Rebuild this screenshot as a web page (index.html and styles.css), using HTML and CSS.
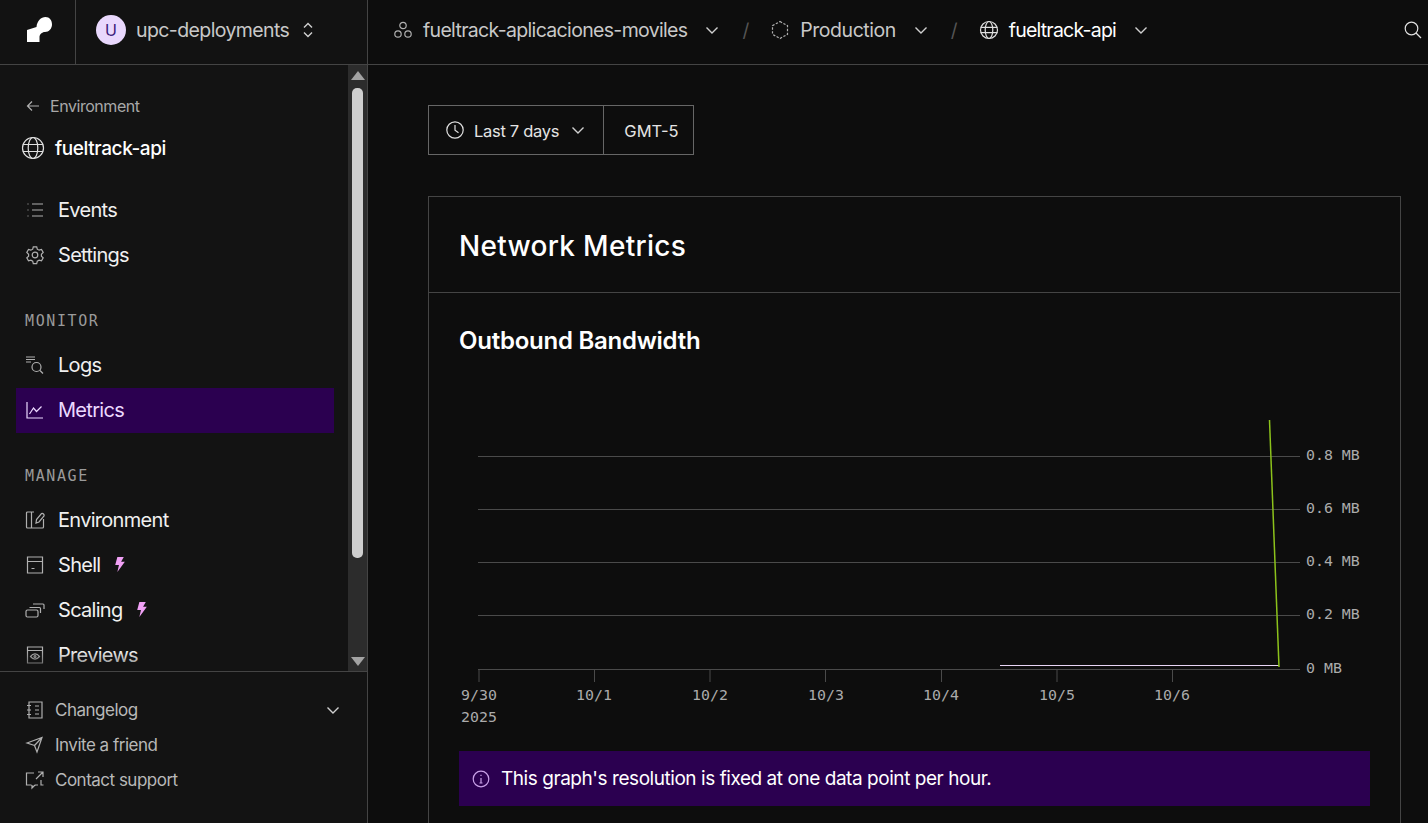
FILE: index.html
```html
<!DOCTYPE html>
<html lang="en">
<head>
  <meta charset="UTF-8">
  <title>fueltrack-api metrics</title>
  <link rel="stylesheet" href="styles.css">
</head>
<body>

  <header class="topbar">
    <div class="topbar-left">
      <div class="logo-cell">
        <svg class="logo" viewBox="0 0 25 25" width="25" height="25"><path fill="#fff" d="M0 13 9.500 10C10 4 14 0 18.500 0 22.600 0 25 3.400 25 7.500 25 11.500 22 15 18 15 15 15 12.500 17.500 12.500 20V25H0Z"/></svg>
      </div>
      <div class="team">
        <span class="avatar">U</span>
        <span class="team-name">upc-deployments</span>
        <svg class="icon-sm" viewBox="0 0 16 20" width="16" height="20"><path d="M4 7.500 8 3.500l4 4M4 12.500l4 4 4-4"/></svg>
      </div>
    </div>
    <nav class="crumbs">
      <svg class="icon" viewBox="0 0 20 20" width="20" height="20"><circle cx="10" cy="5.500" r="3.200"/><circle cx="5" cy="14" r="3.200"/><circle cx="15" cy="14" r="3.200"/></svg>
      <span class="crumb">fueltrack-aplicaciones-moviles</span>
      <svg class="chev" viewBox="0 0 16 16" width="16" height="16"><path d="M2.500 5.500 8 11l5.500-5.500"/></svg>
      <span class="slash">/</span>
      <svg class="icon" viewBox="0 0 20 20" width="20" height="20"><path stroke-dasharray="2.400 1.500" d="M10 1.500 17.500 5.700v8.600L10 18.500l-7.500-4.200V5.700Z"/></svg>
      <span class="crumb crumb-env">Production</span>
      <svg class="chev" viewBox="0 0 16 16" width="16" height="16"><path d="M2.500 5.500 8 11l5.500-5.500"/></svg>
      <span class="slash">/</span>
      <svg class="icon icon-light" viewBox="0 0 20 20" width="20" height="20"><circle cx="10" cy="10" r="8.500"/><ellipse cx="10" cy="10" rx="3.800" ry="8.500"/><path d="M1.500 7.300h17M1.500 12.700h17"/></svg>
      <span class="crumb crumb-current">fueltrack-api</span>
      <svg class="chev" viewBox="0 0 16 16" width="16" height="16"><path d="M2.500 5.500 8 11l5.500-5.500"/></svg>
    </nav>
    <svg class="search icon-light" viewBox="0 0 20 20" width="20" height="20"><circle cx="8.500" cy="8.500" r="6.300"/><path d="m13 13 5 5"/></svg>
  </header>

  <div class="layout">
    <aside class="sidebar">
      <div class="side-scroll">
        <div class="side-nav">
          <a class="back">
            <svg class="icon" viewBox="0 0 16 16" width="16" height="16"><path d="M14 8H2.500M7 3.500 2.500 8 7 12.500"/></svg>
            Environment
          </a>
          <div class="service">
            <svg class="icon icon-light" viewBox="0 0 24 24" width="24" height="24"><circle cx="12" cy="12" r="10.500"/><ellipse cx="12" cy="12" rx="4.800" ry="10.500"/><path d="M1.800 8.500h20.400M1.800 15.500h20.400"/></svg>
            fueltrack-api
          </div>

          <a class="item">
            <svg class="icon" viewBox="0 0 20 20" width="20" height="20"><path d="M7 4h11M7 10h11M7 16h11M2.500 4h1M2.500 10h1M2.500 16h1"/></svg>
            Events
          </a>
          <a class="item">
            <svg class="icon" viewBox="0 0 20 20" width="20" height="20"><circle cx="10" cy="10" r="2.800"/><path d="M8.300 1.800h3.400l.6 2.400 1.800 1 2.400-.7 1.700 3-1.800 1.700v2l1.800 1.700-1.700 3-2.400-.7-1.800 1-.6 2.400H8.300l-.6-2.400-1.800-1-2.400.7-1.700-3 1.800-1.700v-2L1.800 7.500l1.700-3 2.400.7 1.800-1Z"/></svg>
            Settings
          </a>

          <div class="group-label">MONITOR</div>
          <a class="item">
            <svg class="icon" viewBox="0 0 20 20" width="20" height="20"><path d="M1 2h9M1 4.500h9M1 7h5"/><circle cx="11.500" cy="12" r="4.500"/><path d="m15 15.500 3 3"/></svg>
            Logs
          </a>
          <a class="item item-active">
            <svg class="icon" viewBox="0 0 20 20" width="20" height="20"><path d="M2 2v16h16M4.500 14l4-6 3 3.500 5-5"/></svg>
            Metrics
          </a>

          <div class="group-label">MANAGE</div>
          <a class="item">
            <svg class="icon" viewBox="0 0 20 20" width="20" height="20"><path d="M9 2H2.500A1 1 0 0 0 1.500 3v14a1 1 0 0 0 1 1h15a1 1 0 0 0 1-1V9M6.500 2v16M11 13l.5-3.500 5-6a2 2 0 0 1 2.500 2.500l-5 6Z"/></svg>
            Environment
          </a>
          <a class="item">
            <svg class="icon" viewBox="0 0 20 20" width="20" height="20"><path d="M2.500 2h15v16h-15ZM2.500 6.500h15M6.500 13.500h3"/></svg>
            Shell
            <svg class="bolt" viewBox="0 0 10 14" width="11" height="15"><path d="M3 0h6L6.500 4.500H10L3 14l1.500-6.500H1Z"/></svg>
          </a>
          <a class="item">
            <svg class="icon" viewBox="0 0 20 20" width="20" height="20"><rect x="1" y="10" width="12" height="7" rx="1.500"/><path d="M4.500 7.500h10a1 1 0 0 1 1 1V13M8 4h10a1 1 0 0 1 1 1v4"/></svg>
            Scaling
            <svg class="bolt" viewBox="0 0 10 14" width="11" height="15"><path d="M3 0h6L6.500 4.500H10L3 14l1.500-6.500H1Z"/></svg>
          </a>
          <a class="item">
            <svg class="icon" viewBox="0 0 20 20" width="20" height="20"><path d="M2.500 2h15v16h-15ZM2.500 5.500h15"/><path d="M5.500 11.500c2.800-3.400 6.200-3.400 9 0-2.800 3.400-6.200 3.400-9 0Z"/><circle cx="10" cy="11.500" r="1"/></svg>
            Previews
          </a>
        </div>
        <div class="scrollbar">
          <span class="arrow-up"></span>
          <span class="thumb"></span>
          <span class="arrow-down"></span>
        </div>
      </div>

      <div class="side-foot">
        <a class="foot-item">
          <svg class="icon" viewBox="0 0 20 20" width="20" height="20"><path d="M4 2h13v16H4ZM2 5.500h4M2 10h4M2 14.500h4M10 6h4M10 10h4M10 14h4"/></svg>
          Changelog
          <svg class="chev foot-chev" viewBox="0 0 16 16" width="16" height="16"><path d="M2.500 5.500 8 11l5.500-5.500"/></svg>
        </a>
        <a class="foot-item">
          <svg class="icon" viewBox="0 0 20 20" width="20" height="20"><path d="M2 8 17 2.500 12 17l-2.500-6.500ZM9.500 10.500 17 2.500"/></svg>
          Invite a friend
        </a>
        <a class="foot-item">
          <svg class="icon" viewBox="0 0 20 20" width="20" height="20"><path d="M9 3H1.500v12h5M10 15h3M16 10v5h2.500M11 9l7-7M13 2h5v5M7 15v3l3-3"/></svg>
          Contact support
        </a>
      </div>
    </aside>

    <main class="content">
      <div class="filters">
        <div class="filter-range">
          <svg class="icon icon-light" viewBox="0 0 20 20" width="20" height="20"><circle cx="10" cy="10" r="8.200"/><path d="M10 5v5.300l3.500 2.500"/></svg>
          Last 7 days
          <svg class="chev" viewBox="0 0 16 16" width="16" height="16"><path d="M2.500 5.500 8 11l5.500-5.500"/></svg>
        </div>
        <div class="filter-zone">GMT-5</div>
      </div>

      <section class="card">
        <h2 class="card-title">Network Metrics</h2>
        <div class="card-body">
          <h3 class="chart-title">Outbound Bandwidth</h3>
          <svg class="chart" viewBox="0 0 911 351" width="911" height="351">
            <g class="grid">
              <path d="M19 76.500H841M19 129.500H841M19 182.500H841M19 235.500H841M19 289.500H841"/>
              <path d="M20 289v13M135.500 289v13M251 289v13M366.500 289v13M482.500 289v13M598 289v13M713.500 289v13"/>
            </g>
            <g class="labels">
              <text x="847" y="80">0.8 MB</text>
              <text x="847" y="133">0.6 MB</text>
              <text x="847" y="186">0.4 MB</text>
              <text x="847" y="239">0.2 MB</text>
              <text x="847" y="293">0 MB</text>
              <text x="2" y="320">9/30</text>
              <text x="2" y="342">2025</text>
              <text x="117" y="320">10/1</text>
              <text x="233" y="320">10/2</text>
              <text x="349" y="320">10/3</text>
              <text x="464" y="320">10/4</text>
              <text x="580" y="320">10/5</text>
              <text x="695" y="320">10/6</text>
            </g>
            <path class="line-base" d="M541 285.500H820"/>
            <path class="line-spike" d="M810.500 40 820 287"/>
          </svg>
          <div class="notice">
            <svg class="notice-icon" viewBox="0 0 18 18" width="18" height="18"><circle cx="9" cy="9" r="7.800"/><path d="M9 8v5M7.500 13h3M9 4.800v1.200"/></svg>
            This graph's resolution is fixed at one data point per hour.
          </div>
        </div>
      </section>
    </main>
  </div>

</body>
</html>
```

FILE: styles.css
```css
* {
  box-sizing: border-box;
}

html, body {
  height: 100%;
}

body {
  margin: 0;
  display: flex;
  flex-direction: column;
  overflow: hidden;
  background: #0d0d0d;
  color: #fff;
  font-family: Inter, 'Liberation Sans', sans-serif;
}

svg {
  flex: none;
  fill: none;
  stroke-width: 1.2;
}

/* icon colours */
.icon {
  stroke: #b0b0b0;
}

.icon-light {
  stroke: #e0e0e0;
}

.icon-sm, .chev {
  stroke: #d0d0d0;
  stroke-width: 1.4;
}

/* top bar */
.topbar {
  flex: none;
  height: 65px;
  display: flex;
  align-items: center;
  border-bottom: 1px solid #444;
}

.topbar-left {
  flex: none;
  width: 368px;
  height: 100%;
  display: flex;
  background: #121212;
  border-right: 1px solid #444;
}

.logo-cell {
  width: 76px;
  padding: 0 0 6px 4px;
  display: flex;
  align-items: center;
  justify-content: center;
  border-right: 1px solid #444;
}

.logo {
  stroke: none;
}

.team {
  display: flex;
  align-items: center;
  padding: 0 0 4px 20px;
}

.avatar {
  width: 30px;
  height: 30px;
  margin-right: 10px;
  display: flex;
  align-items: center;
  justify-content: center;
  border-radius: 50%;
  background: #e9d8fd;
  color: #3b1a7a;
  font-size: 16px;
}

.team-name {
  margin-right: 11px;
  color: #c8c8c8;
  font-size: 19.500px;
  letter-spacing: -0.600px;
}

.crumbs {
  display: flex;
  align-items: center;
  padding: 0 0 4px 25px;
}

.crumb {
  margin-left: 10px;
  color: #c8c8c8;
  font-size: 19.500px;
  letter-spacing: -0.670px;
}

.crumb-env {
  letter-spacing: -0.450px;
}

.crumb-current {
  color: #fff;
  letter-spacing: -0.770px;
}

.crumbs .chev {
  margin-left: 17px;
}

.slash {
  margin: 0 21px 0 22px;
  color: #555;
  font-size: 19px;
}

.search {
  margin: 0 5px 5px auto;
}

/* sidebar */
.layout {
  flex: 1;
  min-height: 0;
  display: flex;
}

.sidebar {
  flex: none;
  width: 368px;
  display: flex;
  flex-direction: column;
  background: #131313;
  border-right: 1px solid #444;
}

.side-scroll {
  position: relative;
  flex: 1;
  min-height: 0;
  display: flex;
  border-bottom: 1px solid #444;
}

.side-scroll::after {
  content: "";
  position: absolute;
  left: 0;
  right: 19px;
  bottom: 0;
  height: 20px;
  background: linear-gradient(rgba(19, 19, 19, 0), rgba(19, 19, 19, 0.6));
}

.side-nav {
  flex: 1;
  min-width: 0;
  height: 606px;
  overflow: hidden;
  padding: 29px 14px 0 16px;
}

.back {
  display: flex;
  align-items: center;
  gap: 9px;
  height: 24px;
  padding-left: 9px;
  margin-bottom: 18px;
  color: #a8a8a8;
  font-size: 16px;
  letter-spacing: -0.450px;
}

.service {
  display: flex;
  align-items: center;
  gap: 10px;
  height: 24px;
  padding-left: 5px;
  margin-bottom: 28px;
  font-size: 19px;
  font-weight: 500;
  letter-spacing: -0.400px;
}

.item {
  display: flex;
  align-items: center;
  gap: 13px;
  height: 45px;
  padding: 0 0 2px 9px;
  color: #f0f0f0;
  font-size: 20px;
  letter-spacing: -0.700px;
}

.item-active {
  background: #2b0050;
  color: #ecd9ff;
}

.item-active .icon {
  stroke: #ecd9ff;
}

.bolt {
  fill: #f0a0f5;
  stroke: none;
}

.group-label {
  margin: 32px 0 10px;
  padding-left: 9px;
  height: 23px;
  line-height: 23px;
  color: #9a9a9a;
  font-family: 'DejaVu Sans Mono', monospace;
  font-size: 15px;
  letter-spacing: 1.600px;
}

.scrollbar {
  flex: none;
  width: 19px;
  height: 606px;
  display: flex;
  flex-direction: column;
  align-items: center;
  background: #2c2c2c;
}

.arrow-up, .arrow-down {
  flex: none;
  width: 0;
  height: 0;
  border-left: 7px solid transparent;
  border-right: 7px solid transparent;
}

.arrow-up {
  margin-top: 6px;
  border-bottom: 9px solid #a3a3a3;
}

.arrow-down {
  margin-top: auto;
  margin-bottom: 5px;
  border-top: 9px solid #a3a3a3;
}

.thumb {
  width: 11px;
  height: 470px;
  margin-top: 8px;
  border-radius: 5px;
  background: #cfcfcf;
}

.side-foot {
  flex: none;
  height: 151px;
  padding: 20px 26px 0 25px;
}

.foot-item {
  display: flex;
  align-items: center;
  gap: 10px;
  height: 35px;
  color: #b8b8b8;
  font-size: 17px;
  letter-spacing: -0.500px;
}

.foot-chev {
  margin-left: auto;
}

/* main area */
.content {
  flex: 1;
  min-width: 0;
  overflow: hidden;
  padding: 40px 27px 0 60px;
}

.filters {
  display: flex;
  width: 266px;
  height: 50px;
  border: 1px solid #666;
  font-size: 16.500px;
  color: #e4e4e4;
}

.filter-range {
  width: 175px;
  display: flex;
  align-items: center;
  gap: 9px;
  padding: 2px 0 0 16px;
  border-right: 1px solid #666;
  letter-spacing: -0.300px;
}

.filter-range svg {
  margin-top: -2px;
}

.filter-range .chev {
  margin-left: 2px;
}

.filter-zone {
  flex: 1;
  display: flex;
  align-items: center;
  justify-content: center;
  padding: 2px 0 0 6px;
}

.card {
  margin-top: 41px;
  height: 800px;
  border: 1px solid #444;
}

.card-title {
  height: 96px;
  margin: 0;
  padding: 2px 0 0 30px;
  display: flex;
  align-items: center;
  border-bottom: 1px solid #444;
  font-size: 28px;
  font-weight: 500;
  letter-spacing: 0.300px;
}

.card-body {
  padding: 30px;
}

.chart-title {
  margin: 0;
  height: 28px;
  line-height: 36px;
  font-size: 24px;
  font-weight: 600;
  letter-spacing: -0.250px;
}

.chart {
  display: block;
  margin-top: 29px;
}

.grid {
  stroke: #4a4a4a;
  stroke-width: 1;
}

.labels {
  fill: #ababab;
  font-family: 'DejaVu Sans Mono', monospace;
  font-size: 14.900px;
}

.line-base {
  stroke: #e8d5f5;
  stroke-width: 1;
}

.line-spike {
  stroke: #8cc21b;
  stroke-width: 1.500;
}

.notice {
  display: flex;
  align-items: center;
  gap: 11px;
  height: 55px;
  margin-top: 20px;
  padding-left: 13px;
  background: #2b0050;
  font-size: 19px;
  letter-spacing: -0.450px;
}

.notice-icon {
  stroke: #c9a0e8;
}
```
